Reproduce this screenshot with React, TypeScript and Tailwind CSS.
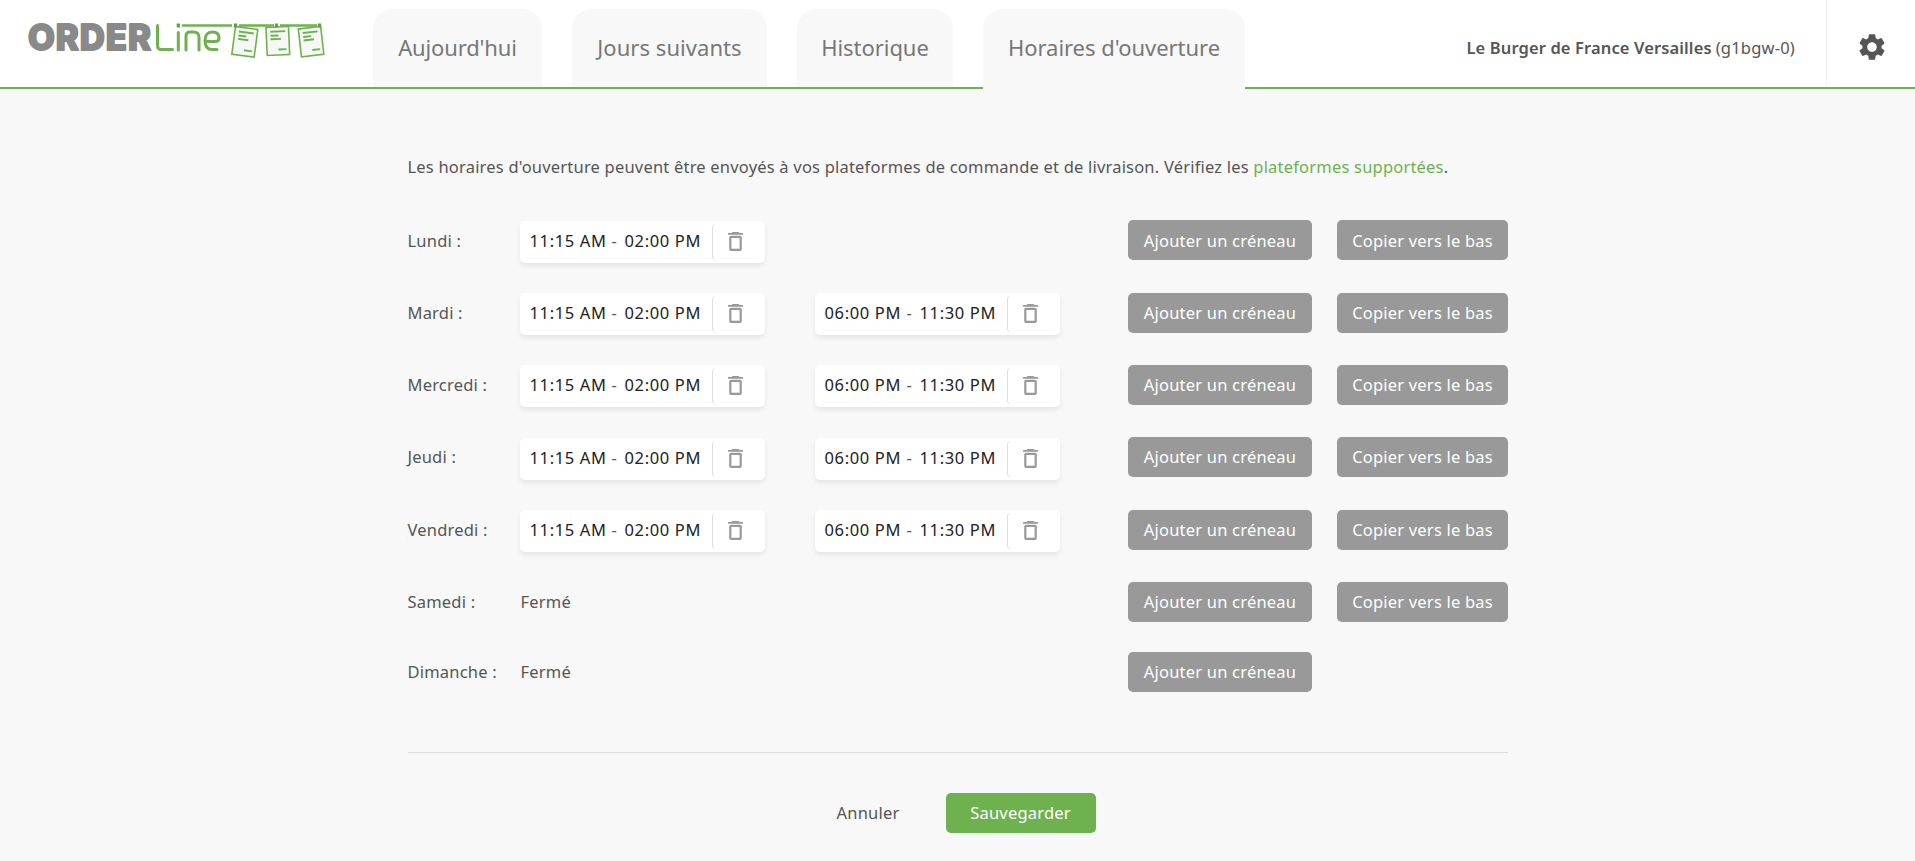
import React from "react";
import { MdSettings } from "react-icons/md";

type TextProps = { text: string; className?: string };

function Text({ text, className = "" }: TextProps) {
  return <span className={"block whitespace-nowrap " + className}>{text}</span>;
}

const tabs = [
  { text: "Aujourd'hui", box: "w-[169px] h-[78px]", track: "tracking-[-0.15px]" },
  { text: "Jours suivants", box: "w-[195px] h-[78px]", track: "tracking-[0.05px]" },
  { text: "Historique", box: "w-[156px] h-[78px]", track: "tracking-[-0.05px]" },
  { text: "Horaires d'ouverture", box: "w-[262px] h-[80px]", track: "tracking-[-0.04px]" },
];

const lunch = { start: "11:15 AM", end: "02:00 PM" };
const dinner = { start: "06:00 PM", end: "11:30 PM" };

const days = [
  { name: "Lundi :", slots: [lunch], height: "h-[73px]", offset: "pt-px", label: "pt-px", button: "pt-0.5" },
  { name: "Mardi :", slots: [lunch, dinner], height: "h-[72px]", offset: "", label: "", button: "" },
  { name: "Mercredi :", slots: [lunch, dinner], height: "h-[72px]", offset: "", label: "", button: "" },
  { name: "Jeudi :", slots: [lunch, dinner], height: "h-[73px]", offset: "pt-px", label: "", button: "" },
  { name: "Vendredi :", slots: [lunch, dinner], height: "h-[72px]", offset: "", label: "", button: "" },
  { name: "Samedi :", slots: [], height: "h-[70px]", offset: "", label: "", button: "" },
  { name: "Dimanche :", slots: [], height: "h-[40px]", offset: "", label: "", button: "" },
];

function Note() {
  return (
    <g fill="#f7f7f7" stroke="#6db24f">
      <rect x="0" y="0" width="22.5" height="28" strokeWidth="1.6" />
      <path d="M4 4.500h15M4 8.500h8M4 12h10.500M11.500 22.500h8" strokeWidth="1.9" />
    </g>
  );
}

function Logo() {
  return (
    <svg width="373" height="80" viewBox="0 0 373 80" className="block">
      <text x="28" y="50.300" fontFamily="Inter, sans-serif" fontWeight="800" fontSize="35.500" letterSpacing="1" fill="#898989" stroke="#898989" strokeWidth="2" strokeLinejoin="round" textLength="124" lengthAdjust="spacingAndGlyphs">ORDER</text>
      <g fill="none" stroke="#6db24f" strokeWidth="3" strokeLinecap="round" strokeLinejoin="round">
        <path d="M157.500 25.500v20q0 4 4 4H172.500M178.300 32.500V50M186 50V36q0-4 4-4h3.500q5.500 0 5.500 5.500V50M217 49.500h-5q-7 0-7-8.800t7.500-8.700q6.500 0 6.500 6q0 3.500-3.500 3.500H206" />
      </g>
      <path d="M182 25.500h50M239 25.500h35M280 25.500h37" stroke="#6db24f" strokeWidth="2.400" />
      <g transform="translate(235.500 26.500) rotate(7.500)"><Note /></g>
      <g transform="translate(266 27.500) rotate(-2.500)"><Note /></g>
      <g transform="translate(298.300 29) rotate(-6.500)"><Note /></g>
      <path d="M178.300 23.500v4M235.500 23.500v4M276.500 23.500v4M319.500 23.500v4" stroke="#5aa53c" strokeWidth="3.200" />
    </svg>
  );
}

function Trash() {
  return (
    <svg width="15" height="20" viewBox="0 0 15 20" className="block">
      <path d="M4.500 0h6l1 1H15v1.800H0V1h3.500z" fill="#999" />
      <rect x="2.300" y="4.800" width="10.400" height="13" rx="0.800" fill="none" stroke="#999" strokeWidth="2.200" />
    </svg>
  );
}

function Slot({ start, end }: { start: string; end: string }) {
  return (
    <div className="flex h-[42px] w-[245px] items-center rounded-[5px] bg-white shadow-[0_3px_5px_rgba(0,0,0,0.08)]">
      <div className="flex h-9 w-[192px] items-center pb-[3px] pl-[10px] leading-6 tracking-[0.65px] text-[#222]">
        <Text text={start} className="w-[82px]" />
        <Text text="-" className="w-[13px] text-[#555]" />
        <Text text={end} />
      </div>
      <div className="flex h-9 w-[53px] items-center rounded-[4px] border-l border-[#ddd] pl-[15px]">
        <Trash />
      </div>
    </div>
  );
}

export default function App() {
  return (
    <div className="flex h-[861px] w-[1915px] flex-col overflow-hidden bg-[#f8f8f8] font-['Noto_Sans','Open_Sans',sans-serif] text-[16.5px] tracking-[0.2px] text-[#555]">
      <header className="flex h-[89px] shrink-0 border-b-2 border-[#6db24f] bg-white">
        <div className="w-[373px]"><Logo /></div>
        <nav className="flex gap-[30px] pt-[9px]">
          {tabs.map((t) => (
            <a key={t.text} className={"flex shrink-0 justify-center rounded-t-[20px] bg-[#f8f8f8] pt-[21px] text-[22px] leading-[34px] text-[#777] " + t.box}>
              <Text text={t.text} className={t.track} />
            </a>
          ))}
        </nav>
        <div className="ml-auto flex items-center gap-1 pt-[9px] pr-[31px]">
          <Text text="Le Burger de France Versailles" className="font-semibold tracking-[0.12px]" />
          <Text text="(g1bgw-0)" />
        </div>
        <div className="flex w-[89px] items-center border-l border-[#f3f3f3] pt-[7px] pl-[29px]">
          <MdSettings size={32} color="#555" />
        </div>
      </header>
      <main className="mx-auto flex w-[1100px] flex-col pt-[66px]">
        <p className="h-[65px] leading-6 whitespace-nowrap">
          Les horaires d'ouverture peuvent être envoyés à vos plateformes de commande et de livraison. Vérifiez les <a className="text-[#6db24f]">plateformes supportées</a>.
        </p>
        {days.map((d) => (
          <div key={d.name} className={"flex " + d.height}>
            <Text text={d.name} className={"w-[112px] leading-10 " + d.label} />
            <div className={"flex w-[608px] items-start gap-[50px] " + d.offset}>
              {d.slots.length ? d.slots.map((s) => <Slot key={s.start} {...s} />) : <Text text="Fermé" className="pl-px leading-10" />}
            </div>
            <div className="flex gap-[25px] text-white">
              <button className="flex h-10 w-[184px] items-center justify-center rounded-[5px] bg-[#999] pl-px"><Text text="Ajouter un créneau" className={d.button} /></button>
              {d.name !== "Dimanche :" && <button className="flex h-10 w-[171px] items-center justify-center rounded-[5px] bg-[#999] pl-px"><Text text="Copier vers le bas" className={d.button} /></button>}
            </div>
          </div>
        ))}
        <div className="mt-[60px] h-px bg-[#ddd]" />
        <div className="mt-10 flex items-center pl-[429px]">
          <Text text="Annuler" className="w-[109px]" />
          <button className="h-10 w-[150px] rounded-[5px] bg-[#6db24f] text-white">Sauvegarder</button>
        </div>
      </main>
    </div>
  );
}
